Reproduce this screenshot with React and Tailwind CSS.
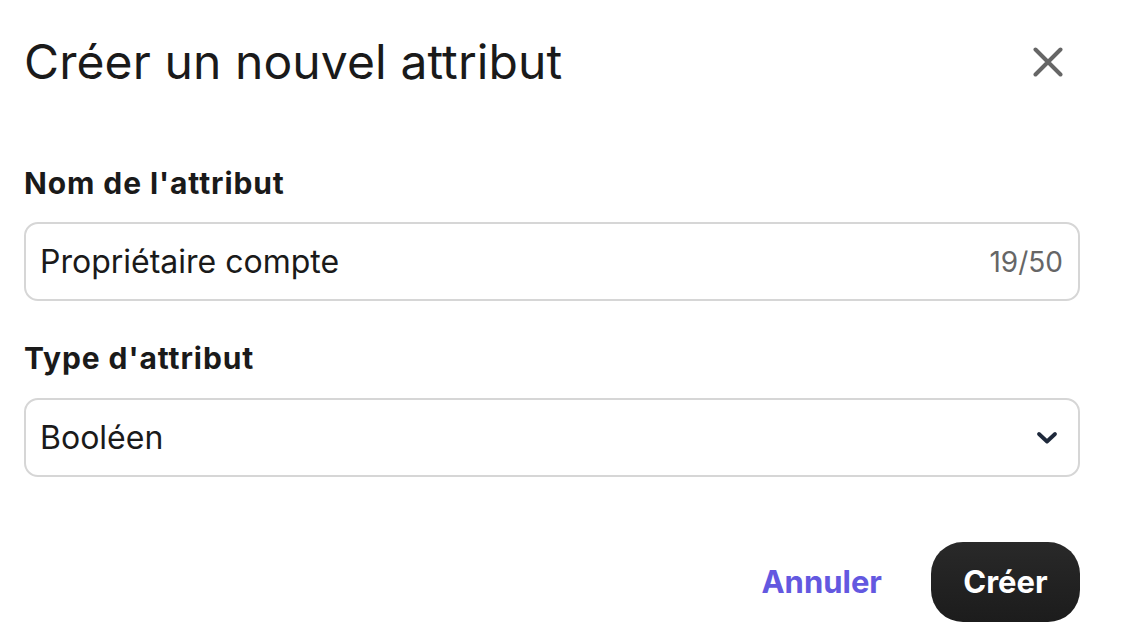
import React from "react";

export default function App() {
  return (
    <div className="w-[1124px] h-[642px] bg-white overflow-hidden" style={{ fontFamily: "Inter, 'Noto Sans', sans-serif" }}>
      <div className="pl-[24px] pr-[44px] pt-[38px]">
        <div className="flex items-center justify-between h-[48px]">
          <h1 className="text-[48px] leading-[48px] font-normal text-[#1a1a1a] tracking-[0.1px]">Créer un nouvel attribut</h1>
          <button className="w-[30px] h-[30px] flex items-center justify-center mr-[17px]">
            <svg width="30" height="30" viewBox="0 0 30 30" fill="none" stroke="#666666" strokeWidth="4" strokeLinecap="round">
              <path d="M2.5 2.5 L27.5 27.5 M27.5 2.5 L2.5 27.5" />
            </svg>
          </button>
        </div>

        <div className="mt-[79px]">
          <label className="block text-[30px] leading-[36px] font-bold text-[#1a1a1a] tracking-[0.9px]">Nom de l'attribut</label>
          <div className="mt-[21px] h-[79px] rounded-[14px] border-2 border-[#d6d6d6] flex items-center justify-between pl-[14px] pr-[15px]">
            <span className="text-[32px] text-[#1a1a1a]">Propriétaire compte</span>
            <span className="text-[28px] text-[#666666]">19/50</span>
          </div>
        </div>

        <div className="mt-[39px]">
          <label className="block text-[30px] leading-[36px] font-bold text-[#1a1a1a] tracking-[0.9px]">Type d'attribut</label>
          <div className="mt-[22px] h-[79px] rounded-[14px] border-2 border-[#d6d6d6] flex items-center justify-between pl-[14px] pr-[20px]">
            <span className="text-[32px] text-[#1a1a1a]">Booléen</span>
            <svg width="22" height="14" viewBox="0 0 22 14" fill="none" stroke="#1e293b" strokeWidth="3.8" strokeLinecap="round" strokeLinejoin="round">
              <path d="M3 3 L11 10.5 L19 3" />
            </svg>
          </div>
        </div>

        <div className="mt-[65px] flex items-center justify-end gap-[49px]">
          <button className="text-[31px] font-bold text-[#6358e0]">Annuler</button>
          <button className="w-[149px] h-[80px] rounded-[32px] bg-gradient-to-b from-[#292929] to-[#1c1c1c] text-white text-[31px] font-bold">Créer</button>
        </div>
      </div>
    </div>
  );
}
